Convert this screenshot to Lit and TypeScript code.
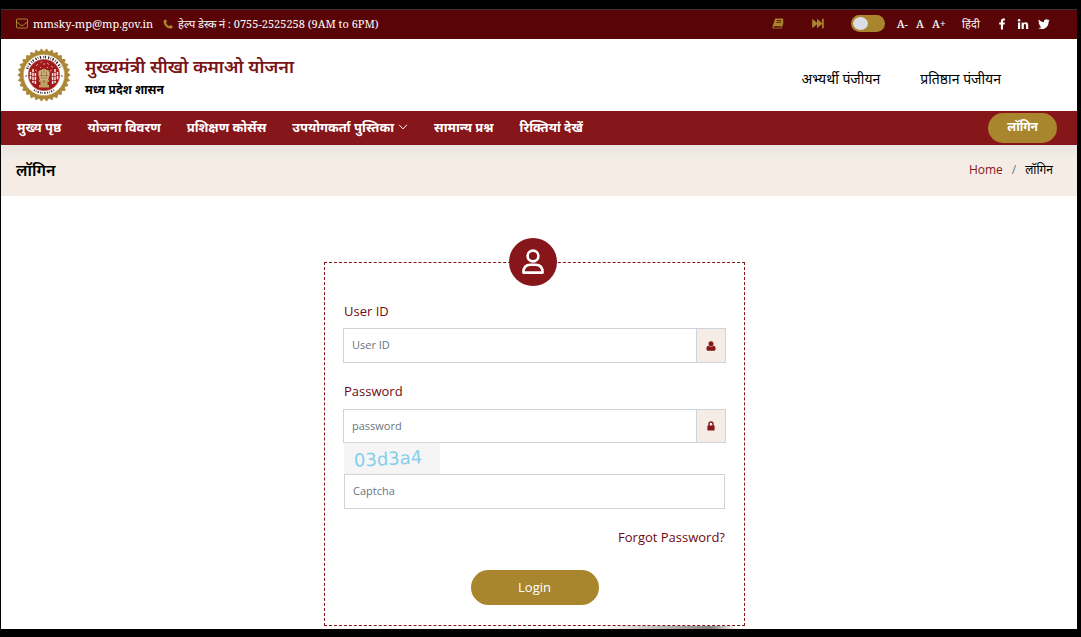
import { LitElement, html, css, svg } from "lit";
import { customElement, state } from "lit/decorators.js";

const TEETH = 30;
const rimPoints = Array.from({ length: TEETH * 2 }, (_, i) => {
  const angle = (i * Math.PI) / TEETH;
  const radius = i % 2 ? 23.4 : 26.2;
  return `${(radius * Math.cos(angle)).toFixed(2)},${(radius * Math.sin(angle)).toFixed(2)}`;
}).join(" ");

const emblem = svg`
  <svg class="emblem" viewBox="-27 -27 54 54" role="img" aria-label="मध्य प्रदेश शासन">
    <polygon points=${rimPoints} fill="#ab8636" stroke="#ab8636" stroke-width=".8" stroke-linejoin="round" />
    <circle r="20.6" fill="#fff" stroke="#c9a45c" stroke-width=".6" />
    <path d="M-16.900-6.200A18 18 0 0 1 16.900-6.200" fill="none" stroke="#2c2020" stroke-width="2.600" stroke-dasharray="1.200 1.300 .6 1.500 1.400 1.800 .7 1.200 1.300 2" />
    <path d="M-10 15A18 18 0 0 0 10 15" fill="none" stroke="#2c2020" stroke-width="1.700" stroke-dasharray="1.100 1.100 .6 1.200 1.400 1.400" />
    <circle cx="-18" cy="1" r=".7" fill="#2c2020" /><circle cx="18" cy="1" r=".7" fill="#2c2020" />
    <circle r="15.800" fill="#a01a1c" stroke="#c26a62" stroke-width=".6" />
    <path d="M-13.500-3v8M-11-6v14M-8.600-2v11M13.500-3v8M11-6v14M8.600-2v11" stroke="#f6e6e2" stroke-width="1.500" stroke-dasharray="3.200 .7" />
    <path d="M-8-9l2-2M-3.500-12l1.500-1.500M3-12l2 1.500M7-9l2 1.500M-9-5l2 1M8-5l-2 1M0-10v-2M-4-8l1 1M4-8l-1 1" stroke="#dc9a92" stroke-width="1" />
    <path d="M-5.500 0Q-6.500-5-2.500-5Q0-7.500 2.500-5Q6.500-5 5.500 0L4.200 5H-4.200Z" fill="#ccb07a" />
    <path d="M-2.500-3.500v5M2.500-3.500v5M0-5.500v4M-4 .5h8M-3 3h6" stroke="#8a6a35" stroke-width=".7" />
    <path d="M-5 5H5V7H3.600V10H5V12.500H-5V10H-3.600V7H-5Z" fill="#bfa062" />
    <circle cy="6.500" r="1" fill="#8a6a35" />
  </svg>`;

const icons = {
  mail: svg`<svg class="i12" viewBox="0 0 12 11" fill="none" stroke="#a9862d"><rect x=".5" y="1" width="11" height="9" rx="1" /><path d="M.8 4L4.800 7.200Q6 8 7.200 7.200L11.200 4" /></svg>`,
  phone: svg`<svg class="i10" viewBox="0 0 10 10" fill="#a9862d"><path d="M2.300.4C1 .8.200 2 .6 3.400 1.500 6.500 3.600 8.600 6.700 9.500 8.200 9.900 9.400 9.100 9.700 7.700L9.400 7.100 7.400 6.100 6.300 7.200Q3.900 6.100 2.900 3.800L4 2.700 3.100.6Z" /></svg>`,
  book: svg`<svg class="i12" viewBox="0 0 12 11"><path d="M3.300.6H10.500Q11.600.6 11.300 1.700L9.600 8.300H2.200Q1.200 8.400 1.400 9.300 1.600 9.700 2.300 9.700H9.200L10.900 3.400 11.700 3.500 10 9.800Q9.800 10.600 9 10.600H2Q.3 10.500.4 8.700Z" fill="#a9862d" /><path d="M4.600 2.600H9.300M4.200 4.300H8.900" stroke="#590507" stroke-width=".8" /></svg>`,
  forward: svg`<svg class="i12" viewBox="0 0 12 10" fill="#a9862d"><path d="M.2.2L5 4.300V.2L10 4.500V.3H11.700V9.700H10V5.500L5 9.800V5.700L.2 9.800Z" /></svg>`,
  facebook: svg`<svg class="social" viewBox="0 0 12 12" fill="#fff"><path d="M8.900.6V2.500H7.800Q7 2.500 7 3.300V4.500H8.900L8.600 6.500H7V11.600H4.900V6.500H3.200V4.500H4.900V3Q4.900.5 7.400.5Z" /></svg>`,
  linkedin: svg`<svg class="social" viewBox="0 0 12 12" fill="#fff"><circle cx="2.100" cy="2.300" r="1.300" /><path d="M1 4.400H3.200V11H1ZM4.600 4.400H6.700V5.300Q7.400 4.200 8.800 4.200 11.200 4.200 11.200 7V11H9V7.400Q9 6 7.900 6 6.800 6 6.800 7.400V11H4.600Z" /></svg>`,
  twitter: svg`<svg class="social" viewBox="0 0 12 12" fill="#fff"><path d="M11.800 2.600L10.600 3.700C10.700 7.600 7.900 11 3.900 11Q1.800 11 .2 9.900 2.200 10 3.600 8.900 1.900 8.700 1.400 7.200H2.400Q.6 6.600.6 4.800L1.600 5.100Q-.1 3.600.9 1.800 2.900 4.100 5.900 4.300 5.500 1.300 8.200 1.200 9.300 1.200 10 1.900L11.500 1.400 10.500 2.700Z" /></svg>`,
  chevron: svg`<svg class="chevron" viewBox="0 0 9 6" fill="none" stroke="#fff"><path d="M.6.8L4.500 4.900 8.400.8" /></svg>`,
  person: svg`<svg class="person" viewBox="0 0 24 26" fill="none" stroke="#fff" stroke-width="2.600" stroke-linejoin="round"><circle cx="12" cy="7" r="5.400" /><path d="M2.400 23.600Q2.400 15.700 9.400 15.700H14.600Q21.600 15.700 21.600 23.600Z" /></svg>`,
  user: svg`<svg class="addon-icon" viewBox="0 0 10 10" fill="#87161a"><circle cx="5" cy="2.700" r="2.500" /><path d="M.4 8Q.4 4.800 2.500 4.700 5 6.500 7.500 4.700 9.600 4.800 9.600 8 9.600 9.800 8.200 9.800H1.800Q.4 9.800.4 8Z" /></svg>`,
  lock: svg`<svg class="addon-icon" viewBox="0 0 10 10"><path d="M3 5V3Q3 1 5 1T7 3V5" fill="none" stroke="#87161a" stroke-width="1.400" /><rect x="1.400" y="4.400" width="7.200" height="5.200" rx=".6" fill="#87161a" /></svg>`,
};

const NAV = [
  { label: "मुख्य पृष्ठ" },
  { label: "योजना विवरण" },
  { label: "प्रशिक्षण कोर्सेस" },
  { label: "उपयोगकर्ता पुस्तिका", menu: true },
  { label: "सामान्य प्रश्न" },
  { label: "रिक्तियां देखें" },
];

@customElement("app-root")
export class AppRoot extends LitElement {
  @state() private contrast = false;

  static styles = css`
    :host {
      display: block;
      font-family: "Open Sans", "Noto Sans", sans-serif;
      font-size: 13px;
      color: #000;
    }
    * { box-sizing: border-box; }
    svg { display: block; flex: none; }
    a { color: inherit; text-decoration: none; }
    button { font: inherit; cursor: pointer; }
    .frame {
      min-height: 100vh;
      display: flex;
      flex-direction: column;
      border: solid #000;
      border-width: 9px 4px 8px 1px;
      background: #fff;
    }
    .topbar {
      height: 30px;
      display: flex;
      align-items: center;
      justify-content: space-between;
      padding: 0 27px 2px 15px;
      border-top: 1px solid #3c3535;
      background: #590507;
      color: #fff;
      font-family: "Noto Serif", "Liberation Serif", serif;
      font-size: 11px;
      white-space: nowrap;
    }
    .contact, .tools, .sizes, .socials, .contact a { display: flex; align-items: center; }
    .contact { gap: 10px; }
    .contact a { gap: 5px; }
    .tools { gap: 16px; }
    .shortcuts { display: flex; gap: 28px; margin-right: 11px; }
    .sizes { gap: 8px; margin-left: -4px; font-weight: 500; }
    .sizes button { border: 0; padding: 0; background: none; color: inherit; }
    .socials { gap: 9px; }
    .i12 { width: 12px; height: 11px; }
    .i10 { width: 10px; height: 10px; }
    .social { width: 12px; height: 12px; }
    .switch {
      appearance: none;
      width: 34px;
      height: 17px;
      margin: 0;
      padding: 2px;
      border-radius: 9px;
      background: #a9862d;
      display: flex;
    }
    .switch::before {
      content: "";
      width: 15px;
      height: 13px;
      border-radius: 50%;
      background: #dadce6;
    }
    .switch:checked { justify-content: flex-end; }
    .header {
      height: 72px;
      display: flex;
      align-items: center;
      justify-content: space-between;
      padding: 0 76px 0 16px;
    }
    .brand { display: flex; align-items: center; gap: 14px; }
    .brand-text { padding-top: 5px; }
    .emblem { width: 54px; height: 54px; }
    .title { margin: 0; font-size: 18px; line-height: 24px; font-weight: 600; color: #7a1417; }
    .state { margin: 0; font-size: 12px; line-height: 24px; font-weight: 700; }
    .register { display: flex; gap: 40px; padding-top: 6px; font-size: 14px; }
    .nav {
      height: 34px;
      display: flex;
      align-items: center;
      justify-content: space-between;
      padding: 0 20px 0 16px;
      background: #87161a;
      color: #fff;
      font-weight: 700;
    }
    .menu { display: flex; gap: 26px; margin: 0; padding: 0 0 2px; list-style: none; white-space: nowrap; }
    .menu a { display: flex; align-items: center; gap: 4px; }
    .chevron { width: 10px; height: 6px; }
    .signin {
      padding: 4px 19px 6px;
      border-radius: 15px;
      background: #a9862d;
      font-size: 12px;
      line-height: 20px;
    }
    .crumbbar {
      height: 51px;
      display: flex;
      align-items: center;
      justify-content: space-between;
      padding: 0 24px 2px 15px;
      background: linear-gradient(#e8e5df, #f5ece6 15px);
    }
    .crumbbar h1 { margin: 0; font-size: 16px; font-weight: 600; }
    .crumbs { display: flex; gap: 9px; font-size: 12px; }
    .crumbs a { color: #87161a; }
    .slash { color: #6c757d; }
    .content {
      flex: 1;
      display: flex;
      flex-direction: column;
      align-items: center;
      padding: 66px 9px 0 0;
    }
    .card {
      position: relative;
      width: 100%;
      max-width: 421px;
      padding: 37px 18px 20px;
      border: 1px dashed #87161a;
      display: flex;
      flex-direction: column;
    }
    .badge {
      position: absolute;
      top: -25px;
      left: calc(50% - 26px);
      width: 48px;
      height: 48px;
      border-radius: 50%;
      background: #87161a;
      display: grid;
      place-items: center;
    }
    .person { width: 24px; height: 26px; }
    .label { line-height: 22px; padding-left: 1px; color: #6e0a10; }
    .group { display: flex; height: 35px; margin: 6px 0 17px; }
    .group.tight { height: 34px; margin: 7px 0 0; }
    input.text {
      flex: 1;
      min-width: 0;
      height: 100%;
      padding: 0 8px 2px;
      border: 1px solid #ced4da;
      border-radius: 0;
      background: #fff;
      font: inherit;
      font-size: 11px;
      color: #495057;
      outline: 0;
    }
    input.text::placeholder { color: #6c757d; opacity: 1; }
    .addon {
      width: 29px;
      border: 1px solid #ced4da;
      border-left: 0;
      background: #f5ece6;
      display: grid;
      place-items: center;
    }
    .addon-icon { width: 10px; height: 10px; }
    .captcha { margin: 0 1px; display: flex; flex-direction: column; }
    .code {
      width: 96px;
      height: 31px;
      background: repeating-conic-gradient(#f3f3f3 0 25%, #f7f7f7 0 50%) 0 0 / 4px 4px;
    }
    .captcha input.text { flex: none; height: 35px; }
    .forgot { align-self: flex-end; margin: 17px 1px 0; line-height: 22px; color: #6e0a10; }
    .login {
      align-self: center;
      width: 128px;
      height: 35px;
      margin-top: 22px;
      padding: 0 0 2px;
      border: 0;
      border-radius: 18px;
      background: #a9862d;
      color: #fff;
    }
    .shade {
      width: 100%;
      max-width: 421px;
      height: 3px;
      background: linear-gradient(90deg, transparent 65%, #888 92%, transparent 98%);
    }
  `;

  render() {
    return html`
      <div class="frame">
        <div class="topbar">
          <div class="contact">
            <a href="mailto:mmsky-mp@mp.gov.in">${icons.mail}mmsky-mp@mp.gov.in</a>
            <a href="tel:07552525258">${icons.phone}<span>हेल्प डेस्क नं : 0755-2525258 (9AM to 6PM)</span></a>
          </div>
          <div class="tools">
            <div class="shortcuts">
              <a href="#guide" aria-label="Guide">${icons.book}</a>
              <a href="#main" aria-label="Skip">${icons.forward}</a>
            </div>
            <input
              class="switch"
              type="checkbox"
              aria-label="Contrast"
              .checked=${this.contrast}
              @change=${(e: Event) => (this.contrast = (e.target as HTMLInputElement).checked)}
            />
            <div class="sizes">
              <button type="button">A-</button>
              <button type="button">A</button>
              <button type="button">A+</button>
            </div>
            <a href="#hi">हिंदी</a>
            <div class="socials">
              <a href="#fb" aria-label="Facebook">${icons.facebook}</a>
              <a href="#in" aria-label="LinkedIn">${icons.linkedin}</a>
              <a href="#tw" aria-label="Twitter">${icons.twitter}</a>
            </div>
          </div>
        </div>

        <header class="header">
          <div class="brand">
            ${emblem}
            <div class="brand-text">
              <p class="title">मुख्यमंत्री सीखो कमाओ योजना</p>
              <p class="state">मध्य प्रदेश शासन</p>
            </div>
          </div>
          <div class="register">
            <a href="#candidate">अभ्यर्थी पंजीयन</a>
            <a href="#establishment">प्रतिष्ठान पंजीयन</a>
          </div>
        </header>

        <nav class="nav">
          <ul class="menu">
            ${NAV.map(
              (n) => html`<li><a href="#nav">${n.label}${n.menu ? icons.chevron : ""}</a></li>`
            )}
          </ul>
          <a class="signin" href="#login">लॉगिन</a>
        </nav>

        <div class="crumbbar">
          <h1>लॉगिन</h1>
          <div class="crumbs">
            <a href="#home">Home</a><span class="slash">/</span><span>लॉगिन</span>
          </div>
        </div>

        <main class="content" id="main">
          <form class="card" @submit=${(e: Event) => e.preventDefault()}>
            <span class="badge">${icons.person}</span>
            <label class="label" for="user">User ID</label>
            <div class="group">
              <input class="text" id="user" placeholder="User ID" />
              <span class="addon">${icons.user}</span>
            </div>
            <label class="label" for="pass">Password</label>
            <div class="group tight">
              <input class="text" id="pass" type="password" placeholder="password" />
              <span class="addon">${icons.lock}</span>
            </div>
            <div class="captcha">
              <svg class="code" viewBox="0 0 96 31" role="img" aria-label="Captcha code">
                <text x="10" y="22" transform="rotate(-3 45 18)" font-family="DejaVu Sans" font-size="18" fill="#87ceeb">03d3a4</text>
              </svg>
              <input class="text" aria-label="Captcha" placeholder="Captcha" />
            </div>
            <a class="forgot" href="#forgot">Forgot Password?</a>
            <button class="login" type="submit">Login</button>
          </form>
          <div class="shade"></div>
        </main>
      </div>
    `;
  }
}
